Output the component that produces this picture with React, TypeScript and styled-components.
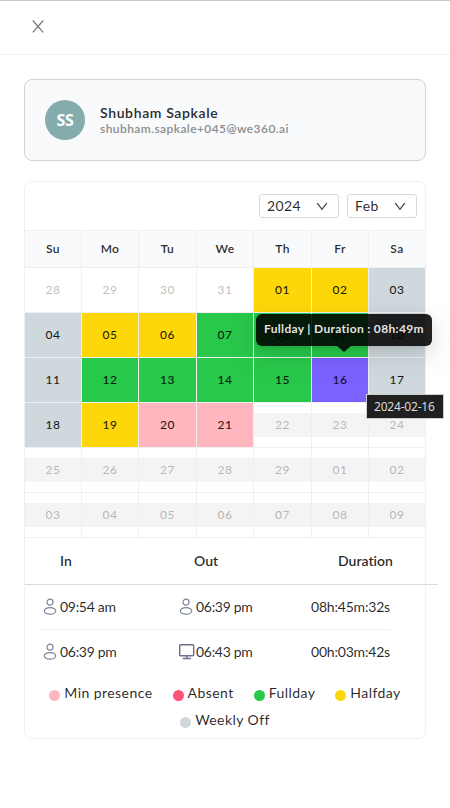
import React from "react";
import styled, { createGlobalStyle } from "styled-components";

const colors = {
  yellow: "#fed70a",
  green: "#28c84b",
  gray: "#cfd8dd",
  pink: "#ffb6be",
  purple: "#7b61ff",
  red: "#ff5378",
  line: "#f0f0f0",
};

const GlobalStyle = createGlobalStyle`
  * { box-sizing: border-box; }
  body {
    margin: 0;
    background: #fff;
    font-family: Lato, sans-serif;
    font-variant-ligatures: none;
    color: rgba(0, 0, 0, 0.85);
  }
`;

const Drawer = styled.div`
  width: 450px;
  height: 808px;
  border-top: 1px solid #c8c8c8;
  background: #fff;
  overflow: hidden;
`;

const DrawerHeader = styled.header`
  height: 54px;
  border-bottom: 1px solid ${colors.line};
  padding: 19px 0 0 32px;
`;

const CloseButton = styled.button`
  display: block;
  border: 0;
  padding: 0;
  background: none;
  line-height: 0;
`;

const Content = styled.main`
  padding: 24px 24px 0;
`;

const ProfileCard = styled.section`
  height: 82px;
  border: 1px solid #d3d5d6;
  border-radius: 8px;
  background: #f9fafc;
  display: flex;
  align-items: center;
  padding-left: 20px;
  gap: 15px;
`;

const Avatar = styled.div`
  width: 40px;
  height: 40px;
  border-radius: 50%;
  background: #84acac;
  color: #fff;
  font: 700 16px/40px "Open Sans", sans-serif;
  letter-spacing: -0.3px;
  text-align: center;
`;

const Name = styled.div`
  font-size: 14px;
  font-weight: 600;
  line-height: 18px;
  letter-spacing: 0.63px;
  color: #2c2c2e;
`;

const Email = styled.div`
  font-size: 12px;
  font-weight: 600;
  line-height: 14px;
  letter-spacing: 0.42px;
  color: #8c8d8f;
`;

const CalendarCard = styled.section`
  margin-top: 20px;
  height: 558px;
  border: 1px solid ${colors.line};
  border-radius: 8px;
`;

const Toolbar = styled.div`
  height: 48px;
  display: flex;
  justify-content: flex-end;
  gap: 8px;
  padding: 12px 8px 0 0;
`;

const Select = styled.div<{ $width: number }>`
  width: ${(p) => p.$width}px;
  height: 24px;
  border: 1px solid #d9d9d9;
  border-radius: 3px;
  display: flex;
  align-items: center;
  justify-content: space-between;
  padding: 0 10px 1px 7px;
  font-size: 14px;
  letter-spacing: 0.35px;

  svg {
    margin-top: 1px;
  }
`;

const Grid = styled.div`
  display: grid;
  grid-template-columns: 57px 57px 58px 57px 58px 57px 56px;
  border-top: 1px solid ${colors.line};
`;

const Cell = styled.div<{ $color?: string }>`
  position: relative;
  height: 45px;
  border-right: 1px solid ${colors.line};
  border-bottom: 1px solid ${colors.line};
  background: ${(p) => p.$color ?? "#fff"};
  display: flex;
  align-items: center;
  font-size: 12px;
  letter-spacing: 0.5px;
  font-weight: 500;

  &:nth-child(7n) {
    border-right: 0;
  }
`;

const HeadCell = styled(Cell)`
  height: 37px;
  background: #f9fafc;
  justify-content: center;
  padding-bottom: 1px;
  font-weight: 600;
  letter-spacing: 0.4px;
`;

const DayLabel = styled.span<{ $muted: boolean; $band: boolean }>`
  flex: 1;
  height: 24px;
  line-height: 24px;
  text-align: center;
  color: ${(p) => (p.$muted ? "rgba(0,0,0,0.27)" : "rgba(0,0,0,0.88)")};
  background: ${(p) => (p.$band ? "#f4f4f4" : "transparent")};
`;

const Tooltip = styled.div`
  position: absolute;
  z-index: 2;
  left: -56px;
  top: -44px;
  width: 176px;
  height: 32px;
  padding-left: 8px;
  border-radius: 6px;
  background: rgba(0, 0, 0, 0.87);
  box-shadow: 0 3px 6px -4px rgba(0, 0, 0, 0.12), 0 6px 16px rgba(0, 0, 0, 0.08),
    0 9px 28px 8px rgba(0, 0, 0, 0.05);
  color: rgba(255, 255, 255, 0.9);
  font-size: 12px;
  font-weight: 700;
  line-height: 30px;
  letter-spacing: 0.32px;
  white-space: nowrap;

  &::after {
    content: "";
    position: absolute;
    left: 81px;
    top: 32px;
    border: 7px solid transparent;
    border-top: 6px solid rgba(0, 0, 0, 0.87);
    border-bottom: 0;
  }
`;

const DateHint = styled.div`
  position: absolute;
  z-index: 3;
  left: 54px;
  top: 36px;
  width: 78px;
  height: 25px;
  border: 1px solid #cfcfcf;
  background: #202021;
  color: #dadada;
  font: 400 12px/23px "Noto Sans", sans-serif;
  letter-spacing: -0.2px;
  padding-left: 7px;
  white-space: nowrap;
`;

const SessionHead = styled.div`
  width: 413px;
  height: 47px;
  border-bottom: 1px solid #d9d9d9;
  display: grid;
  grid-template-columns: 134px 144px 1fr;
  padding-left: 35px;
  font-size: 14px;
  font-weight: 600;
  line-height: 46px;
  letter-spacing: 0;
`;

const SessionRow = styled.div`
  width: 350px;
  height: 45px;
  margin-left: 15px;
  padding-left: 3px;
  border-bottom: 1px solid ${colors.line};
  display: grid;
  grid-template-columns: 136px 132px 1fr;
  align-items: center;
  font-size: 14px;
  line-height: 20px;
  letter-spacing: -0.3px;

  &:last-of-type {
    border-bottom-color: transparent;
  }
`;

const Sessions = styled.div``;

const Stamp = styled.span`
  display: flex;
  align-items: center;
  white-space: nowrap;

  svg {
    flex: none;
    margin-right: 1px;
  }
`;

const Duration = styled.span`
  letter-spacing: -0.2px;
`;

const Legend = styled.div`
  display: flex;
  flex-direction: column;
  align-items: center;
  padding-top: 4px;
`;

const LegendRow = styled.div`
  display: flex;
  justify-content: center;
  gap: 20px;
  height: 27px;
  font-size: 14px;
  line-height: 27px;
  letter-spacing: 0.44px;
`;

const LegendItem = styled.span`
  display: flex;
  white-space: nowrap;
`;

const Dot = styled.i<{ $color: string }>`
  width: 11px;
  height: 11px;
  border-radius: 50%;
  margin: 11px 4px 0 0;
  background: ${(p) => p.$color};
`;

const CloseIcon = () => (
  <svg width="12" height="13" viewBox="0 0 12 13" fill="none" stroke="#777" strokeWidth="1.25">
    <path d="M.8.5 11.2 12.3M11.2.5.8 12.3" />
  </svg>
);

const Chevron = () => (
  <svg width="12" height="9" viewBox="0 0 12 9" fill="none" stroke="#444" strokeWidth="1.3">
    <path d="M1.2 1.2 6 7.3l4.8-6.1" />
  </svg>
);

const PersonIcon = () => (
  <svg width="16" height="18" viewBox="0 0 16 18" fill="none" stroke="#7a8299" strokeWidth="1.2">
    <circle cx="7" cy="4.2" r="3" />
    <ellipse cx="7" cy="12.9" rx="5.7" ry="3.3" />
  </svg>
);

const MonitorIcon = () => (
  <svg width="16" height="18" viewBox="0 0 16 18" fill="none" stroke="#69718a" strokeWidth="1.4">
    <rect x="0.7" y="1.7" width="14" height="11" rx="1" />
    <path d="M7.8 12.7v2.8M3.8 15.5h8" />
  </svg>
);

type Day = { label: string; color?: string; muted?: boolean; band?: boolean };

const out = (...labels: string[]): Day[] => labels.map((label) => ({ label, muted: true }));
const future = (...labels: string[]): Day[] =>
  labels.map((label) => ({ label, muted: true, band: true }));
const marked = (color: string, ...labels: string[]): Day[] =>
  labels.map((label) => ({ label, color }));

const days: Day[] = [
  ...out("28", "29", "30", "31"),
  ...marked(colors.yellow, "01", "02"),
  ...marked(colors.gray, "03", "04"),
  ...marked(colors.yellow, "05", "06"),
  ...marked(colors.green, "07", "08", "09"),
  ...marked(colors.gray, "10", "11"),
  ...marked(colors.green, "12", "13", "14", "15"),
  ...marked(colors.purple, "16"),
  ...marked(colors.gray, "17", "18"),
  ...marked(colors.yellow, "19"),
  ...marked(colors.pink, "20", "21"),
  ...future("22", "23", "24", "25", "26", "27", "28", "29", "01", "02"),
  ...future("03", "04", "05", "06", "07", "08", "09"),
];

const weekdays = ["Su", "Mo", "Tu", "We", "Th", "Fr", "Sa"];

const sessions = [
  { start: "09:54 am", end: "06:39 pm", icon: <PersonIcon />, duration: "08h:45m:32s" },
  { start: "06:39 pm", end: "06:43 pm", icon: <MonitorIcon />, duration: "00h:03m:42s" },
];

const legend = [
  { label: "Min presence", color: colors.pink },
  { label: "Absent", color: colors.red },
  { label: "Fullday", color: colors.green },
  { label: "Halfday", color: colors.yellow },
];

export default function App() {
  return (
    <Drawer>
      <GlobalStyle />
      <DrawerHeader>
        <CloseButton aria-label="Close">
          <CloseIcon />
        </CloseButton>
      </DrawerHeader>
      <Content>
        <ProfileCard>
          <Avatar>SS</Avatar>
          <div>
            <Name>Shubham Sapkale</Name>
            <Email>shubham.sapkale+045@we360.ai</Email>
          </div>
        </ProfileCard>
        <CalendarCard>
          <Toolbar>
            <Select $width={80}>
              2024 <Chevron />
            </Select>
            <Select $width={70}>
              Feb <Chevron />
            </Select>
          </Toolbar>
          <Grid>
            {weekdays.map((day) => (
              <HeadCell key={day}>{day}</HeadCell>
            ))}
            {days.map((day, i) => (
              <Cell key={i} $color={day.color}>
                <DayLabel $muted={!!day.muted} $band={!!day.band}>
                  {day.label}
                </DayLabel>
                {day.label === "16" && (
                  <>
                    <Tooltip>Fullday | Duration : 08h:49m</Tooltip>
                    <DateHint>2024-02-16</DateHint>
                  </>
                )}
              </Cell>
            ))}
          </Grid>
          <SessionHead>
            <span>In</span>
            <span>Out</span>
            <span>Duration</span>
          </SessionHead>
          <Sessions>
            {sessions.map((s) => (
              <SessionRow key={s.start}>
                <Stamp>
                  <PersonIcon />
                  {s.start}
                </Stamp>
                <Stamp>
                  {s.icon}
                  {s.end}
                </Stamp>
                <Duration>{s.duration}</Duration>
              </SessionRow>
            ))}
          </Sessions>
          <Legend>
            <LegendRow>
              {legend.map((item) => (
                <LegendItem key={item.label}>
                  <Dot $color={item.color} />
                  {item.label}
                </LegendItem>
              ))}
            </LegendRow>
            <LegendRow>
              <LegendItem>
                <Dot $color={colors.gray} />
                Weekly Off
              </LegendItem>
            </LegendRow>
          </Legend>
        </CalendarCard>
      </Content>
    </Drawer>
  );
}
